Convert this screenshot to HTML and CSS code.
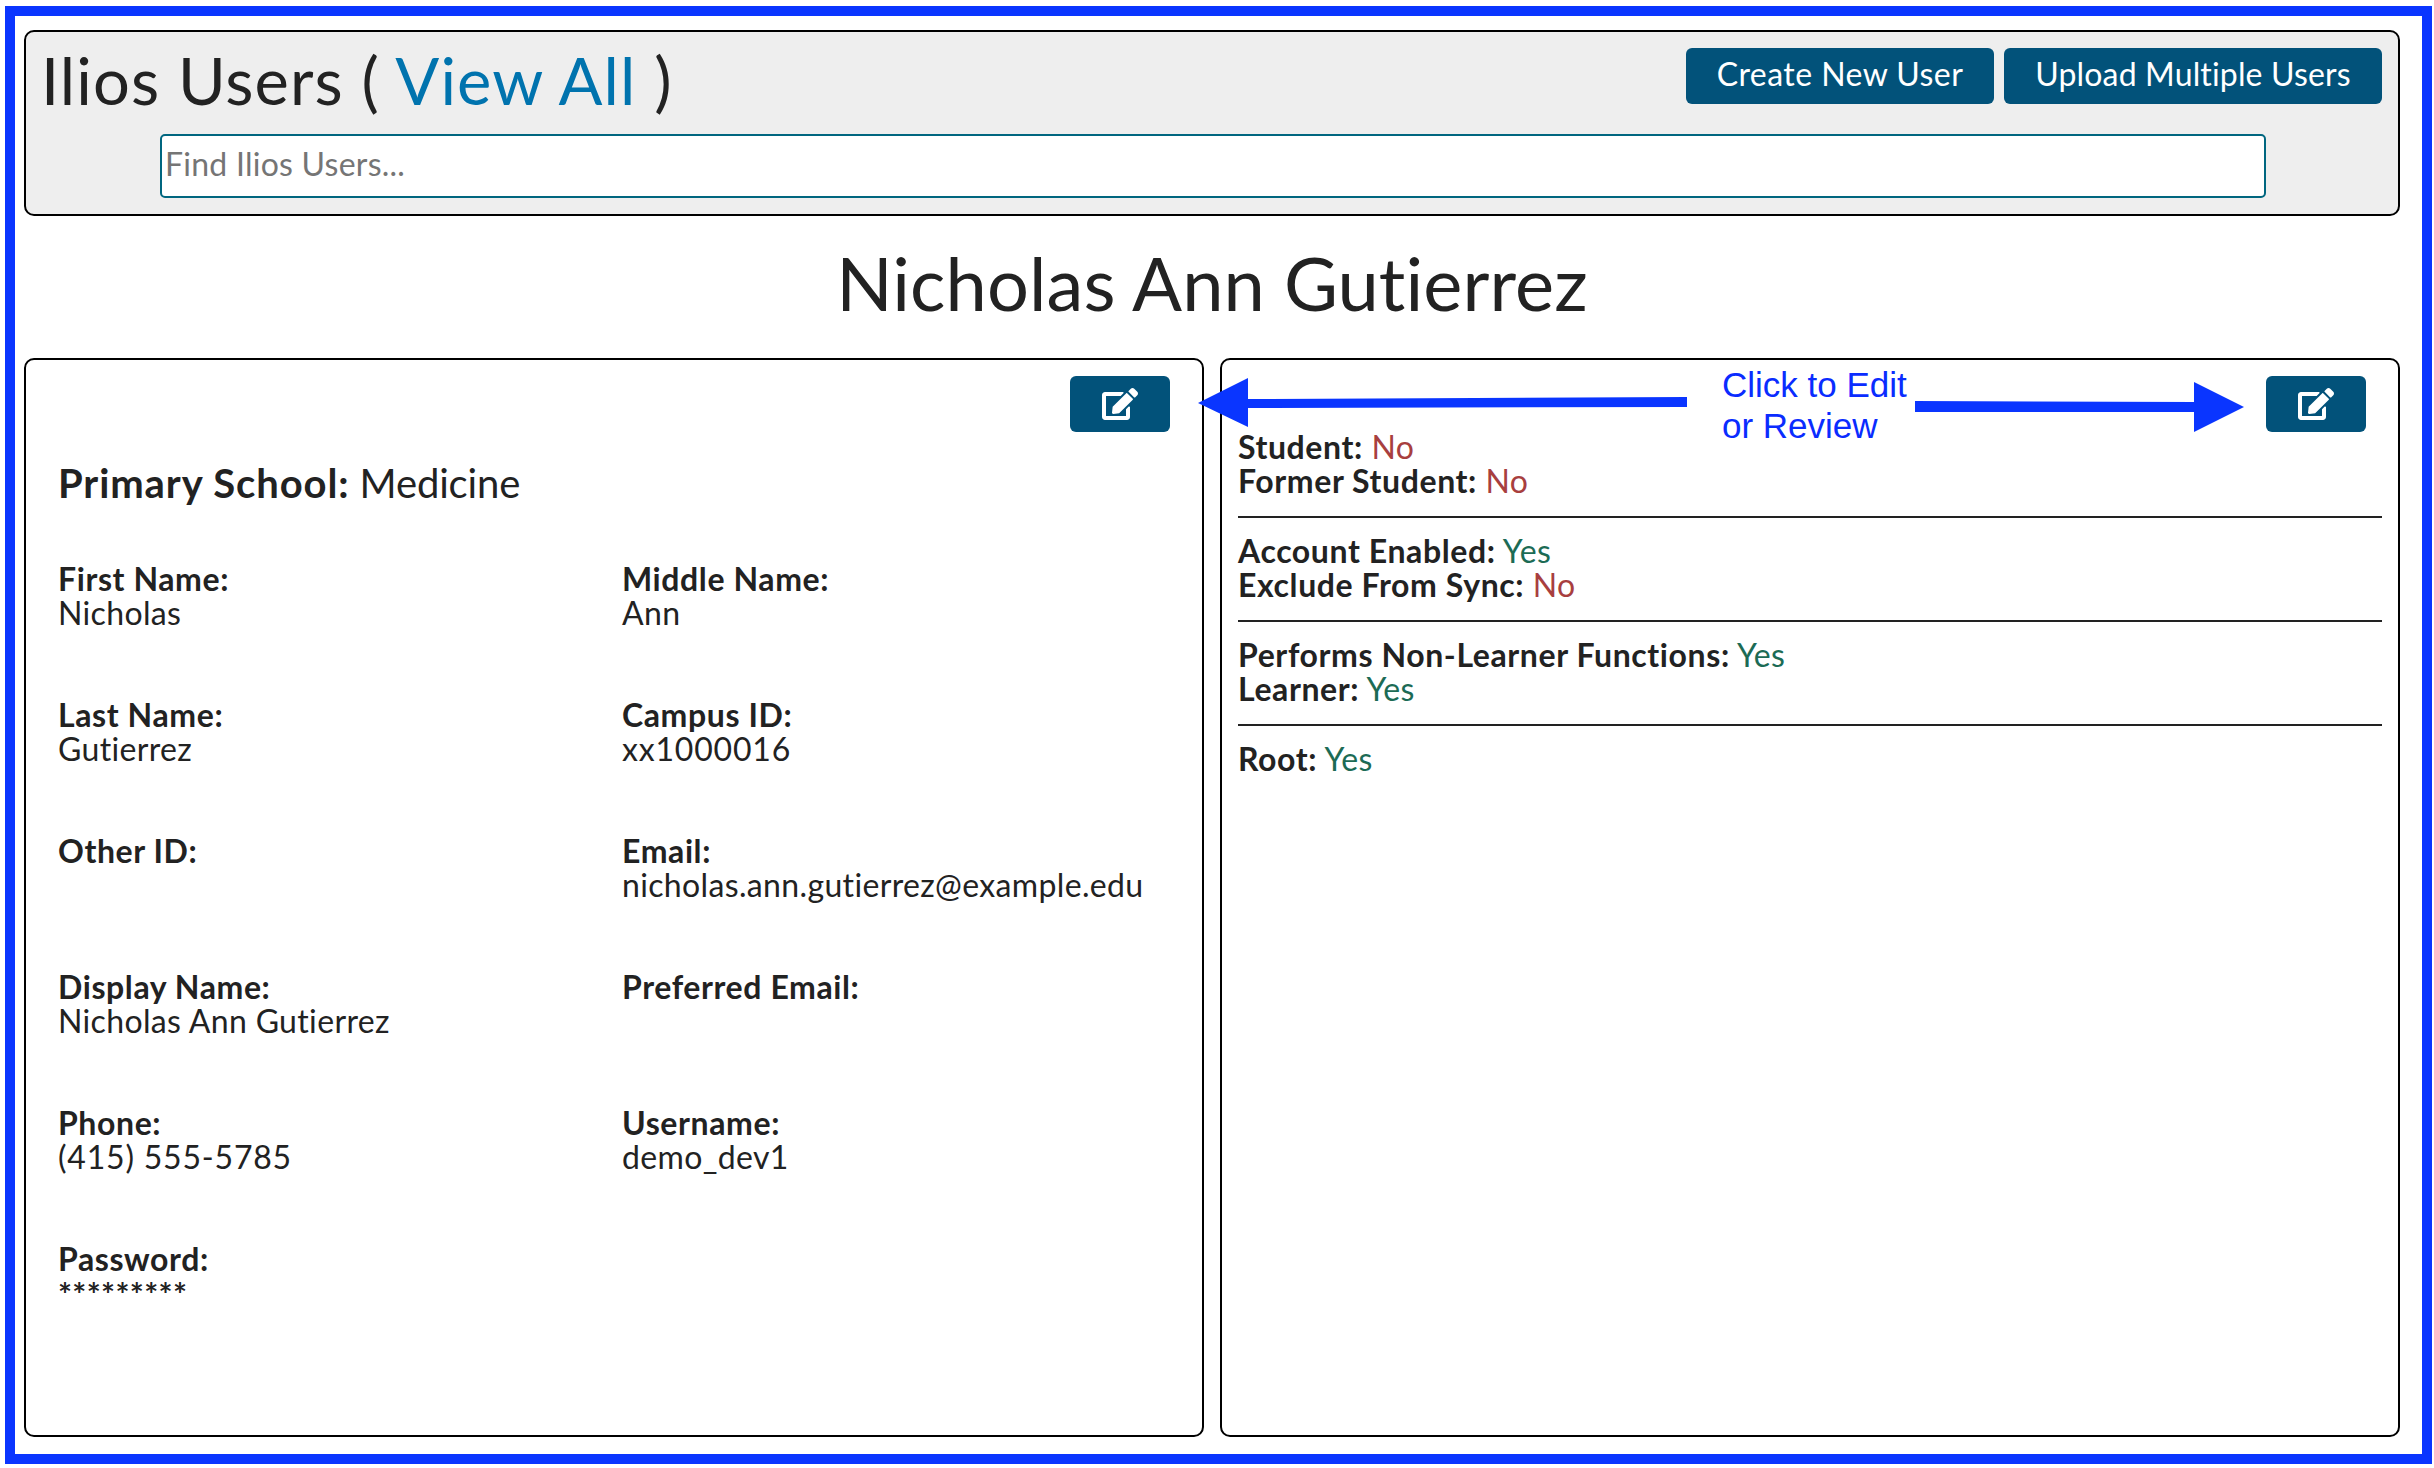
FILE: index.html
```html
<!DOCTYPE html>
<html lang="en">
<head>
  <meta charset="UTF-8">
  <title>Ilios Users</title>
  <link rel="stylesheet" href="styles.css">
</head>
<body>
  <div class="frame">
    <header class="search-card">
      <div class="search-top">
        <h1 class="search-title">Ilios Users ( <a href="#">View All</a> )</h1>
        <div class="search-actions">
          <button class="btn btn-create">Create New User</button>
          <button class="btn btn-upload">Upload Multiple Users</button>
        </div>
      </div>
      <input class="search-input" type="text" placeholder="Find Ilios Users...">
    </header>

    <h2 class="user-name">Nicholas Ann Gutierrez</h2>

    <div class="panels">
      <section class="panel">
        <div class="panel-tools">
          <button class="btn btn-edit" aria-label="Edit">
            <svg class="edit-icon" viewBox="0 0 576 512"><path fill="currentColor" d="M402.6 83.2l90.2 90.2c3.8 3.8 3.8 10 0 13.8L274.4 405.6l-92.8 10.3c-12.4 1.4-22.9-9.1-21.5-21.5l10.3-92.8L388.8 83.2c3.8-3.8 10-3.8 13.8 0zm162-22.9l-48.8-48.8c-15.2-15.2-39.9-15.2-55.2 0l-35.4 35.4c-3.8 3.8-3.8 10 0 13.8l90.2 90.2c3.8 3.8 10 3.8 13.8 0l35.4-35.4c15.2-15.3 15.2-40 0-55.2zM384 346.2V448H64V128h229.8c3.2 0 6.2-1.3 8.5-3.5l40-40c7.6-7.6 2.2-20.5-8.5-20.5H48C21.5 64 0 85.5 0 112v352c0 26.5 21.5 48 48 48h352c26.5 0 48-21.5 48-48V306.2c0-10.7-12.9-16-20.5-8.5l-40 40c-2.2 2.3-3.5 5.3-3.5 8.5z"/></svg>
          </button>
        </div>
        <p class="primary-school"><b>Primary School:</b> Medicine</p>
        <div class="fields">
          <div class="field"><b>First Name:</b><span>Nicholas</span></div>
          <div class="field"><b>Middle Name:</b><span>Ann</span></div>
          <div class="field"><b>Last Name:</b><span>Gutierrez</span></div>
          <div class="field"><b>Campus ID:</b><span class="digits">xx1000016</span></div>
          <div class="field"><b>Other ID:</b><span></span></div>
          <div class="field"><b>Email:</b><span>nicholas.ann.gutierrez@example.edu</span></div>
          <div class="field"><b>Display Name:</b><span>Nicholas Ann Gutierrez</span></div>
          <div class="field"><b>Preferred Email:</b><span></span></div>
          <div class="field"><b>Phone:</b><span class="digits">(415) 555-5785</span></div>
          <div class="field"><b>Username:</b><span>demo_dev1</span></div>
          <div class="field"><b>Password:</b><span class="stars">*********</span></div>
        </div>
      </section>

      <section class="panel panel-flags">
        <div class="panel-tools">
          <button class="btn btn-edit" aria-label="Edit">
            <svg class="edit-icon" viewBox="0 0 576 512"><path fill="currentColor" d="M402.6 83.2l90.2 90.2c3.8 3.8 3.8 10 0 13.8L274.4 405.6l-92.8 10.3c-12.4 1.4-22.9-9.1-21.5-21.5l10.3-92.8L388.8 83.2c3.8-3.8 10-3.8 13.8 0zm162-22.9l-48.8-48.8c-15.2-15.2-39.9-15.2-55.2 0l-35.4 35.4c-3.8 3.8-3.8 10 0 13.8l90.2 90.2c3.8 3.8 10 3.8 13.8 0l35.4-35.4c15.2-15.3 15.2-40 0-55.2zM384 346.2V448H64V128h229.8c3.2 0 6.2-1.3 8.5-3.5l40-40c7.6-7.6 2.2-20.5-8.5-20.5H48C21.5 64 0 85.5 0 112v352c0 26.5 21.5 48 48 48h352c26.5 0 48-21.5 48-48V306.2c0-10.7-12.9-16-20.5-8.5l-40 40c-2.2 2.3-3.5 5.3-3.5 8.5z"/></svg>
          </button>
        </div>
        <div class="flags">
          <p><b>Student:</b> <span class="no">No</span></p>
          <p><b>Former Student:</b> <span class="no">No</span></p>
        </div>
        <div class="flags">
          <p><b>Account Enabled:</b> <span class="yes">Yes</span></p>
          <p><b>Exclude From Sync:</b> <span class="no">No</span></p>
        </div>
        <div class="flags">
          <p><b>Performs Non-Learner Functions:</b> <span class="yes">Yes</span></p>
          <p><b>Learner:</b> <span class="yes">Yes</span></p>
        </div>
        <div class="flags">
          <p><b>Root:</b> <span class="yes">Yes</span></p>
        </div>
      </section>
    </div>
  </div>

  <!-- annotation drawn over the screenshot -->
  <svg class="callout-arrows" viewBox="0 0 2434 1468">
    <polygon points="1687,397 1248,399 1248,378 1198,403 1248,427 1248,408 1687,407"/>
    <polygon points="1915,401 2194,402 2194,382 2244,407 2194,432 2194,412 1915,412"/>
  </svg>
  <div class="callout-text">Click to Edit<br>or Review</div>
</body>
</html>
```

FILE: styles.css
```css
* {
  box-sizing: border-box;
}
html, body {
  margin: 0;
  height: 100%;
  background: #fff;
}
body {
  position: relative;
  overflow: hidden;
  font-family: "Lato", "Open Sans", sans-serif;
  font-variant-ligatures: none;
  color: #222;
}
p {
  margin: 0;
}
b {
  letter-spacing: .6px;
}
.frame {
  width: 2427px;
  height: 1458px;
  margin: 6px 0 0 5px;
  padding: 14px 22px 0 9px;
  border: 10px solid #0a35ff;
}
.search-card {
  height: 186px;
  padding: 16px 16px 0 15px;
  background: #eee;
  border: 2px solid #000;
  border-radius: 10px;
}
.search-top {
  display: flex;
  justify-content: space-between;
  height: 86px;
}
.search-title {
  margin: 0;
  font-size: 65px;
  font-weight: 400;
  line-height: 64px;
  letter-spacing: 1.1px;
  white-space: pre-wrap;
}
.search-title a {
  color: #0073ae;
  text-decoration: none;
}
.search-actions {
  display: flex;
  gap: 10px;
}
.btn {
  padding: 0 0 5px;
  border: 0;
  border-radius: 6px;
  background: #02527a;
  color: #fff;
  font-family: inherit;
  font-size: 32px;
  letter-spacing: .3px;
}
.btn-create {
  width: 308px;
  height: 56px;
  letter-spacing: .45px;
}
.btn-upload {
  width: 378px;
  height: 56px;
  letter-spacing: .15px;
}
.btn-edit {
  display: flex;
  align-items: center;
  justify-content: center;
  width: 100px;
  height: 56px;
  padding: 0;
}
.edit-icon {
  width: 36px;
  height: 32px;
}
.search-input {
  display: block;
  width: 2106px;
  height: 64px;
  margin: 0 0 0 119px;
  padding: 0 3px 5px;
  border: 2px solid #00667f;
  border-radius: 5px;
  background: #fff;
  font-family: inherit;
  font-size: 32px;
  letter-spacing: .25px;
}
.search-input::placeholder {
  color: #757575;
}
.user-name {
  height: 142px;
  margin: 0;
  font-size: 74px;
  font-weight: 400;
  line-height: 134px;
  letter-spacing: .1px;
  text-align: center;
}
.panels {
  display: grid;
  grid-template-columns: 1180px 1180px;
  gap: 16px;
}
.panel {
  height: 1079px;
  padding: 16px 32px 0 32px;
  border: 2px solid #000;
  border-radius: 10px;
  font-size: 32px;
  line-height: 34px;
  letter-spacing: .35px;
}
.panel-flags {
  padding-left: 16px;
  padding-right: 16px;
}
.panel-tools {
  display: flex;
  justify-content: flex-end;
  height: 56px;
}
.panel-flags .panel-tools {
  padding-right: 16px;
}
.primary-school {
  margin-top: 29px;
  height: 101px;
  font-size: 40px;
  line-height: 44px;
  letter-spacing: -.15px;
}
.primary-school b {
  letter-spacing: .9px;
}
.fields {
  display: grid;
  grid-template-columns: 564px 1fr;
  grid-auto-rows: 136px;
}
.field b,
.field span {
  display: block;
}
.field .digits {
  letter-spacing: .8px;
}
.field .stars {
  margin-top: 1px;
  font-size: 33px;
  font-weight: 700;
}
.flags {
  padding: 0 0 18px;
  margin: 0 0 16px;
  border-bottom: 2px solid #222;
}
.flags:last-child {
  border-bottom: 0;
}
.panel-tools + .flags {
  margin-top: -2px;
}
.no {
  color: #a83f3f;
}
.yes {
  color: #1c6b55;
}
.callout-arrows {
  position: absolute;
  left: 0;
  top: 0;
  width: 2434px;
  height: 1468px;
  fill: #0a35ff;
  pointer-events: none;
}
.callout-text {
  position: absolute;
  left: 1722px;
  top: 364px;
  font-family: "Liberation Sans", sans-serif;
  font-size: 35px;
  line-height: 41px;
  color: #0a2cff;
}
```
